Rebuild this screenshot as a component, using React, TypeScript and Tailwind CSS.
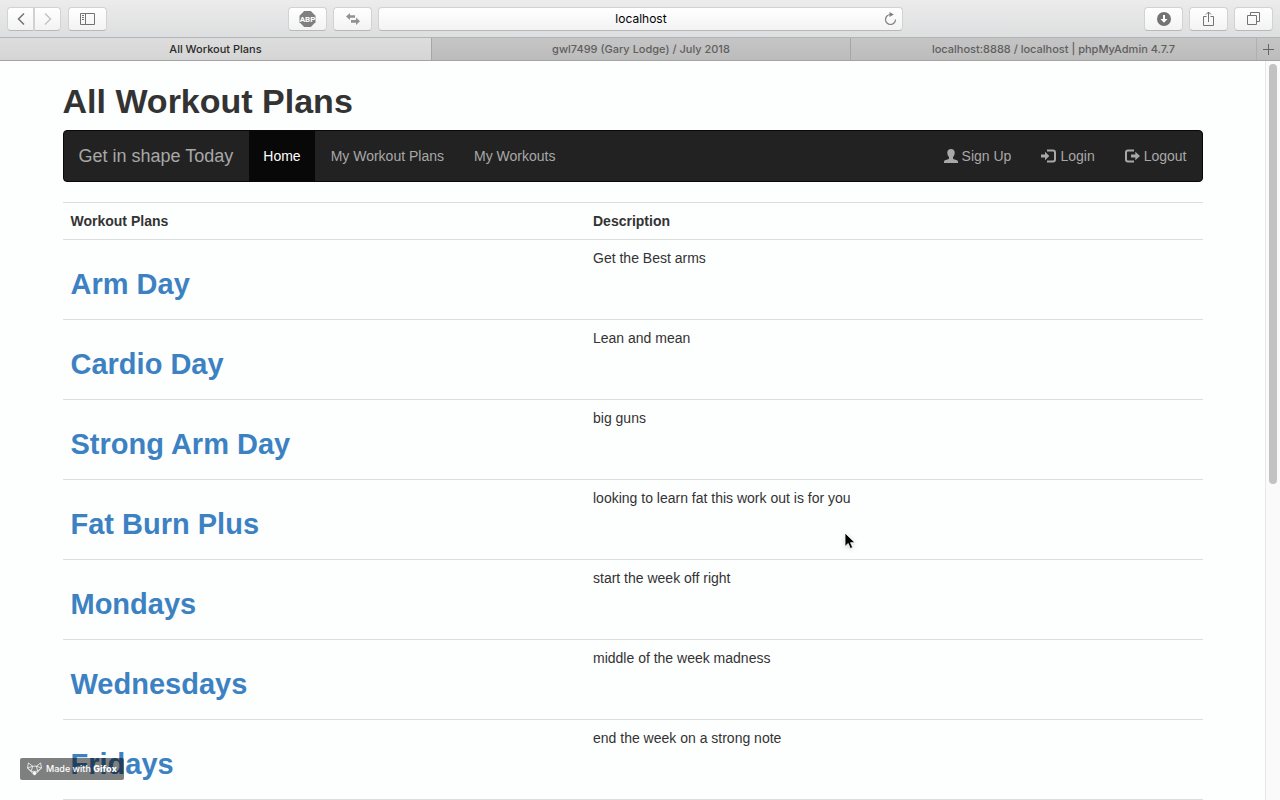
import type { ReactNode } from "react";

const plans = [
  { name: "Arm Day", description: "Get the Best arms" },
  { name: "Cardio Day", description: "Lean and mean" },
  { name: "Strong Arm Day", description: "big guns" },
  { name: "Fat Burn Plus", description: "looking to learn fat this work out is for you" },
  { name: "Mondays", description: "start the week off right" },
  { name: "Wednesdays", description: "middle of the week madness" },
  { name: "Fridays", description: "end the week on a strong note" },
];

function ToolButton({ label, className = "w-[39px] rounded", children }: { label: string; className?: string; children: ReactNode }) {
  return (
    <button
      type="button"
      aria-label={label}
      className={`flex h-6 items-center justify-center border border-[#d2d2d2] border-b-[#b9b9b9] bg-linear-to-b from-white to-[#f3f3f3] text-[#737373] ${className}`}
    >
      {children}
    </button>
  );
}

function Toolbar() {
  return (
    <div className="grid h-[38px] grid-cols-[281fr_615fr_370fr] items-center border-b border-[#b4b4b4] bg-linear-to-b from-[#ececec] to-[#dddedf] px-[7px]">
      <div className="flex">
        <ToolButton label="Back" className="w-[27px] rounded-l">
          <svg width="8" height="14" viewBox="0 0 8 14" fill="none" stroke="currentColor" strokeWidth="1.5"><path d="M7 1.5 1.5 7 7 12.500" /></svg>
        </ToolButton>
        <ToolButton label="Forward" className="w-[27px] rounded-r">
          <svg width="8" height="14" viewBox="0 0 8 14" fill="none" stroke="#c3c3c3" strokeWidth="1.500"><path d="M1 1.500 6.500 7 1 12.500" /></svg>
        </ToolButton>
        <div className="pl-[7px]">
          <ToolButton label="Show sidebar">
            <svg width="15" height="12" viewBox="0 0 15 12" fill="none" stroke="currentColor"><path d="M.5.5h14v11H.5zM5.500.5v11M2 2.500h2M2 4.500h2M2 6.500h2" /></svg>
          </ToolButton>
        </div>
      </div>
      <div className="flex gap-[6px]">
        <ToolButton label="Adblock Plus">
          <svg width="17" height="16" viewBox="0 0 17 16">
            <path d="M5.200 0h6.600l4.700 4.700v6.600L11.800 16H5.200L.5 11.300V4.700z" fill="#808080" />
            <text x="8.500" y="10.800" textAnchor="middle" fontFamily="Roboto, sans-serif" fontWeight="700" fontSize="8" fill="#fff">ABP</text>
          </svg>
        </ToolButton>
        <ToolButton label="Switch">
          <svg width="14" height="12" viewBox="0 0 14 12" fill="#929292"><path d="M0 3.500 4 0v2.200h5v2.600H4V7zM14 8.300 10 12V9.700H5V7h5V4.600z" /></svg>
        </ToolButton>
        <div className="flex h-6 flex-1 items-center rounded border border-[#d2d2d2] border-b-[#b9b9b9] bg-linear-to-b from-white to-[#f3f3f3] px-[5px]">
          <input
            aria-label="Address"
            defaultValue="localhost"
            className="min-w-0 flex-1 bg-transparent pl-[14px] text-center text-xs text-black outline-none"
          />
          <button type="button" aria-label="Reload" className="text-[#808080]">
            <svg width="13" height="14" viewBox="0 0 13 14" fill="none" stroke="currentColor" strokeWidth="1.200"><path d="M6.500 2.500A5 5 0 1 0 11.500 7.500" /><path d="M5.500 0v5L9.800 2.500z" fill="currentColor" stroke="none" /></svg>
          </button>
        </div>
      </div>
      <div className="flex justify-end gap-[6px]">
        <ToolButton label="Downloads">
          <svg width="14" height="14" viewBox="0 0 14 14"><circle cx="7" cy="7" r="7" fill="#737373" /><path d="M6 3h2v4h2.500L7 10.800 3.500 7H6z" fill="#fff" /></svg>
        </ToolButton>
        <ToolButton label="Share">
          <svg width="11" height="16" viewBox="0 0 11 16" fill="none" stroke="currentColor"><path d="M3.500 5.500h-3v9h10v-9h-3M5.500 11V1M3 3.500 5.500 1 8 3.500" /></svg>
        </ToolButton>
        <ToolButton label="Show all tabs">
          <svg width="13" height="13" viewBox="0 0 13 13" fill="none" stroke="currentColor"><path d="M.5 3.500h9v9h-9zM3.500 3.500v-3h9v9h-3" /></svg>
        </ToolButton>
      </div>
    </div>
  );
}

function TabBar() {
  return (
    <div className="flex h-[23px] border-b border-[#a4a4a4] bg-linear-to-b from-[#c5c5c5] to-[#bcbcbc] text-[11px] font-medium text-[#5f5f5f]">
      <button type="button" className="min-w-0 flex-[432] border-r border-[#a6a6a6] bg-linear-to-b from-[#dddddd] to-[#d5d5d5] text-[#2a2a2a]">All Workout Plans</button>
      <button type="button" className="min-w-0 flex-[419] border-r border-[#a6a6a6]">gwl7499 (Gary Lodge) / July 2018</button>
      <button type="button" className="min-w-0 flex-[406] border-r border-[#b0b0b0]">localhost:8888 / localhost | phpMyAdmin 4.7.7</button>
      <button type="button" aria-label="New tab" className="flex w-[23px] items-center justify-center">
        <svg width="11" height="11" viewBox="0 0 11 11" stroke="#666"><path d="M5.500 0v11M0 5.500h11" /></svg>
      </button>
    </div>
  );
}

function UserIcon() {
  return (
    <svg width="14" height="14" viewBox="0 0 14 14" fill="currentColor"><path d="M7 0C4.700 0 3.300 1.300 3.300 3.500c0 2 .7 3.600 1.700 4.600v1c0 .6-.3.900-.8 1.100L1 11.300c-.6.300-1 .8-1 1.500V14h14v-1.200c0-.7-.4-1.200-1-1.500l-3.200-1.100c-.5-.2-.8-.5-.8-1.100v-1c1-1 1.700-2.600 1.700-4.600C10.700 1.300 9.300 0 7 0z" /></svg>
  );
}

function LoginIcon() {
  return (
    <svg width="15" height="14" viewBox="0 0 15 14" fill="currentColor"><path d="M4 2.800 8.300 7 4 11.200V8.500H0v-3h4z" /><path d="M6 1.500h6q2 0 2 2v7q0 2-2 2H6" fill="none" stroke="currentColor" strokeWidth="2" /></svg>
  );
}

function LogoutIcon() {
  return (
    <svg width="15" height="14" viewBox="0 0 15 14" fill="currentColor"><path d="M10.300 2.800 15 7l-4.700 4.200V8.500H6v-3h4.300z" /><path d="M9 1.500H3q-2 0-2 2v7q0 2 2 2h6" fill="none" stroke="currentColor" strokeWidth="2" /></svg>
  );
}

function NavBar() {
  return (
    <nav className="mb-5 flex h-[52px] items-stretch rounded border border-[#080808] bg-[#222] text-sm text-[#a8a8a8]">
      <a href="#" className="flex items-center pr-4 pl-[15px] text-lg">Get in shape Today</a>
      <a href="#" className="flex items-center bg-[#080808] px-[14px] text-white">Home</a>
      <a href="#" className="flex items-center px-4">My Workout Plans</a>
      <a href="#" className="flex items-center px-[14px]">My Workouts</a>
      <div className="ml-auto flex">
        <a href="#" className="flex items-center gap-1 px-[15px]"><UserIcon />Sign Up</a>
        <a href="#" className="flex items-center gap-1 px-[15px]"><LoginIcon />Login</a>
        <a href="#" className="flex items-center gap-1 px-[15px]"><LogoutIcon />Logout</a>
      </div>
    </nav>
  );
}

function PlansTable() {
  return (
    <table className="w-full table-fixed border-separate border-spacing-0 text-left text-sm leading-5">
      <thead>
        <tr>
          <th className="w-11/24 border-t border-[#ddd] p-2 font-bold">Workout Plans</th>
          <th className="border-t border-[#ddd] p-2 font-bold">Description</th>
        </tr>
      </thead>
      <tbody>
        {plans.map((plan) => (
          <tr key={plan.name}>
            <td className="border-t border-[#ddd] p-2 align-top">
              <h2 className="mt-5 mb-[10px] text-[29px] leading-[33px] font-bold text-[#3c82c2]">
                <a href="#">{plan.name}</a>
              </h2>
            </td>
            <td className="border-t border-[#ddd] p-2 align-top">{plan.description}</td>
          </tr>
        ))}
        <tr>
          <td colSpan={2} className="border-t border-[#ddd]" />
        </tr>
      </tbody>
    </table>
  );
}

function GifoxBadge() {
  return (
    <div className="absolute bottom-5 left-5 flex h-[22px] items-center gap-1 rounded-xs bg-black/50 px-[7px] text-[9px] font-medium text-white">
      <svg width="15" height="14" viewBox="0 0 16 14" fill="none" stroke="#fff" strokeWidth=".8" strokeLinejoin="round">
        <path d="M1.500.5 6 4h4L14.500.5 15.500 6 8 13.500.5 6zM.5 6 6 4M10 4l5.500 2M1.500 6.500l3.500 3h6l3.500-3M4.500 9.500 6 4M11.500 9.500 10 4" />
        <path d="m6.300 11 1.700-.8 1.700.8L8 13.500z" fill="#fff" />
      </svg>
      <span>Made with <b className="font-extrabold">Gifox</b></span>
    </div>
  );
}

export default function App() {
  return (
    <div className="relative flex h-screen flex-col overflow-hidden bg-[#fdfefe] font-['Inter',sans-serif]">
      <header>
        <Toolbar />
        <TabBar />
      </header>
      <div className="flex min-h-0 flex-1">
        <main className="min-w-0 flex-1 overflow-hidden font-['Liberation_Sans',sans-serif] text-[#333]">
          <div className="mx-auto w-full max-w-[1170px] px-[15px]">
            <h1 className="mt-[21px] mb-[9px] text-[34px] leading-[39px] font-bold">All Workout Plans</h1>
            <NavBar />
            <PlansTable />
          </div>
        </main>
        <div className="w-[15px] border-l border-[#e8e8e8] bg-[#fafafa] pt-[3px] pl-[3px]">
          <div className="h-[57%] w-2 rounded-full bg-[#c2c2c2]" />
        </div>
      </div>
      <svg className="absolute top-[532px] left-[844px] drop-shadow-sm" width="12" height="18" viewBox="0 0 12 18" aria-hidden="true">
        <path d="M1 1v13.500l3.200-3L6.300 16.500l2.400-1-2.100-4.800H11z" fill="#000" stroke="#fff" strokeWidth=".8" />
      </svg>
      <GifoxBadge />
    </div>
  );
}
